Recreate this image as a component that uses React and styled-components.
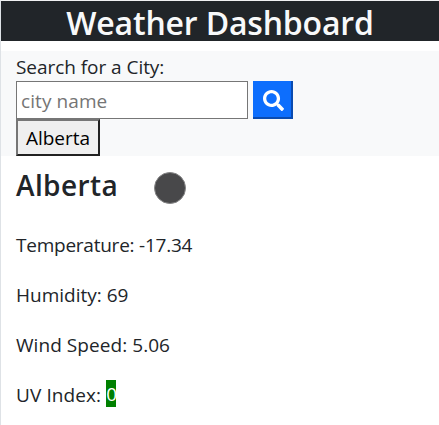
import React from "react";
import styled, { createGlobalStyle } from "styled-components";
import { FaSearch } from "react-icons/fa";

const GlobalStyle = createGlobalStyle`
  *, *::before, *::after { box-sizing: border-box; }
  body {
    margin: 0;
    background: #fff;
    color: #212529;
    font-family: "Open Sans", "Noto Sans", sans-serif;
    font-size: 19px;
    line-height: 30px;
    overflow: hidden;
  }
`;

const Page = styled.div`
  height: 425px;
  border-top: 1px solid #f0f1f2;
  border-left: 1px solid #dee2e6;
`;

const Header = styled.header`
  height: 40px;
  margin-bottom: 10px;
  background: #212529;
  color: #f8f9fa;
  text-align: center;
`;

const Title = styled.h1`
  margin: 0;
  font-size: 32px;
  font-weight: 600;
  line-height: 44px;
  letter-spacing: ${(p) => p.$spacing};
`;

const SearchPanel = styled.section`
  height: 105px;
  padding-left: 15px;
  background: #f8f9fa;
`;

const Text = styled.span`
  letter-spacing: ${(p) => p.$spacing};
`;

const Label = styled.label`
  display: block;
  height: 30px;
  line-height: 32px;
`;

const SearchRow = styled.div`
  display: flex;
  gap: 5px;
  height: 38px;
`;

const CityInput = styled.input`
  width: 232px;
  height: 38px;
  padding: 2px 4px 0;
  border: 1px solid #767676;
  border-radius: 0;
  background: #fff;
  font: inherit;
  letter-spacing: ${(p) => p.$spacing};
  &::placeholder { color: #757575; }
`;

const SearchButton = styled.button`
  display: flex;
  align-items: center;
  justify-content: center;
  width: 40px;
  height: 38px;
  padding: 2px 0 0 3px;
  border: 0 solid #0a4bb0;
  border-width: 0 2px 2px 0;
  background: #0d6efd;
  color: #fff;
  font-size: 21px;
`;

const HistoryButton = styled.button`
  display: block;
  width: 84px;
  height: 37px;
  padding: 1px 0 0;
  border: 2px solid;
  border-color: #767676 #212121 #212121 #767676;
  background: #efefef;
  color: #000;
  font: inherit;
`;

const Weather = styled.main`
  padding-left: 15px;
`;

const CityRow = styled.div`
  display: flex;
  height: 74px;
`;

const CityName = styled.h2`
  width: 138px;
  margin: 0;
  font-size: 28px;
  font-weight: 600;
  line-height: 58px;
  letter-spacing: ${(p) => p.$spacing};
`;

const ConditionIcon = styled.span`
  width: 32px;
  height: 32px;
  margin-top: 16px;
  border: 1px solid #858586;
  border-radius: 50%;
  background: #48484a;
`;

const Reading = styled.p`
  height: 30px;
  margin: 0 0 20px;
  white-space: pre;
`;

const UvBadge = styled.span`
  display: inline-block;
  width: 10px;
  height: 27px;
  line-height: 29px;
  vertical-align: top;
  background: #008000;
  color: #fff;
`;

export default function App() {
  return (
    <>
      <GlobalStyle />
      <Page>
        <Header>
          <Title $spacing="-0.18px">Weather Dashboard</Title>
        </Header>
        <SearchPanel>
          <Label htmlFor="city"><Text $spacing="-0.05px">Search for a City:</Text></Label>
          <SearchRow>
            <CityInput id="city" placeholder="city name" $spacing="0.08px" />
            <SearchButton aria-label="Search"><FaSearch /></SearchButton>
          </SearchRow>
          <HistoryButton><Text $spacing="0">Alberta</Text></HistoryButton>
        </SearchPanel>
        <Weather>
          <CityRow>
            <CityName $spacing="0.4px">Alberta</CityName>
            <ConditionIcon />
          </CityRow>
          <Reading><Text $spacing="-0.24px">Temperature: -17.34</Text></Reading>
          <Reading><Text $spacing="0">Humidity: 69</Text></Reading>
          <Reading><Text $spacing="0.06px">Wind Speed: 5.06</Text></Reading>
          <Reading><Text $spacing="0.1px">UV Index: </Text><UvBadge>0</UvBadge></Reading>
        </Weather>
      </Page>
    </>
  );
}
